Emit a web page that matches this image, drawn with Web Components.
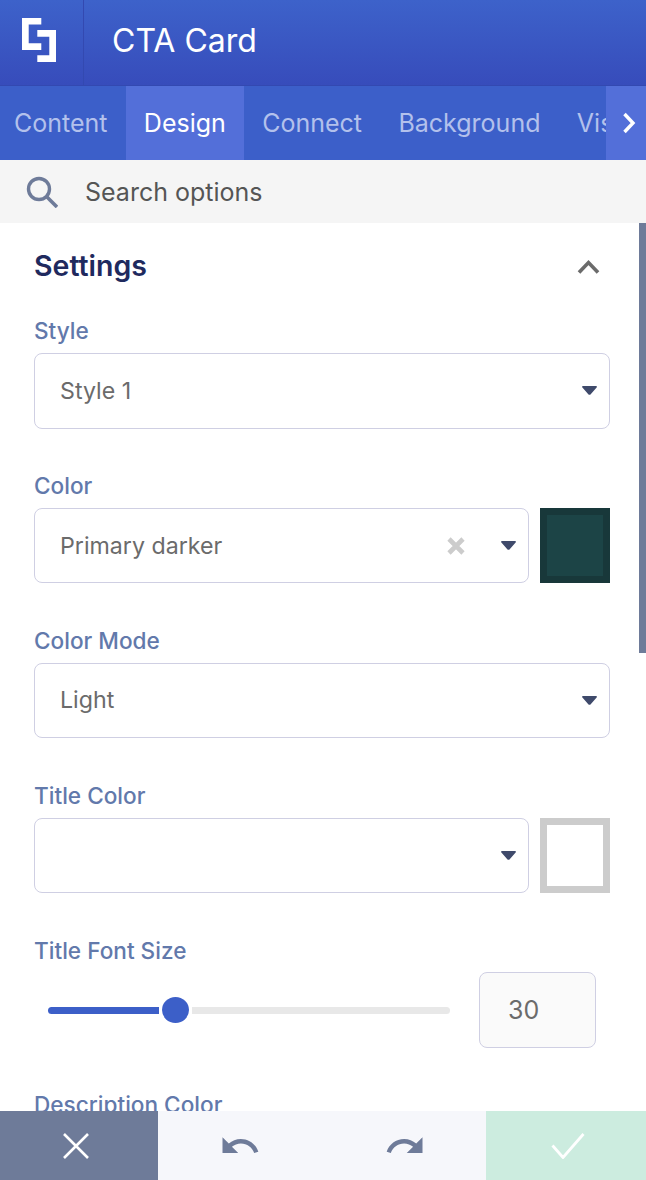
<!DOCTYPE html>
<html>
<head>
<meta charset="utf-8">
<title>CTA Card</title>
<style>
html, body { margin: 0; height: 100%; }
body { font-family: "Inter", "Liberation Sans", sans-serif; background: #fff; }
</style>
</head>
<body>
<builder-app>
  <builder-header slot="top">CTA Card</builder-header>
  <builder-tabs slot="top"></builder-tabs>
  <search-bar slot="top">Search options</search-bar>

  <settings-panel heading="Settings">
    <option-field label="Style"><select-box value="Style 1"></select-box></option-field>
    <option-field label="Color">
      <select-box value="Primary darker" clearable></select-box>
      <color-swatch color="#1c4446" edge="#18383a"></color-swatch>
    </option-field>
    <option-field label="Color Mode"><select-box value="Light"></select-box></option-field>
    <option-field label="Title Color">
      <select-box></select-box>
      <color-swatch color="#fff" edge="#ccc"></color-swatch>
    </option-field>
    <option-field label="Title Font Size"><range-input value="30"></range-input></option-field>
    <option-field label="Description Color"><select-box></select-box></option-field>
  </settings-panel>

  <action-bar slot="bottom"></action-bar>
</builder-app>

<script>
class BuilderApp extends HTMLElement {
  constructor() {
    super();
    this.attachShadow({ mode: "open" }).innerHTML = `
<style>
:host { display: flex; flex-direction: column; height: 100vh; overflow: hidden; }
.body { flex: 1; min-height: 0; overflow: hidden; position: relative; }
.thumb { position: absolute; top: 0; right: 0; width: 7px; height: 430px; background: #6e7b99; }
</style>
<slot name="top"></slot>
<div class="body"><slot></slot><div class="thumb"></div></div>
<slot name="bottom"></slot>`;
  }
}
customElements.define("builder-app", BuilderApp);

class BuilderHeader extends HTMLElement {
  constructor() {
    super();
    this.attachShadow({ mode: "open" }).innerHTML = `
<style>
:host { display: flex; height: 86px; box-sizing: border-box; color: #fff; font-size: 32px;
  background: linear-gradient(#3d62ca, #374cbb); border-bottom: 1px solid #3349b1; }
.logo { width: 83px; display: flex; align-items: center; justify-content: center; border-right: 1px solid #3349b1; }
.title { padding-left: 28px; display: flex; align-items: center; padding-bottom: 5px; }
svg { display: block; margin-left: -4px; margin-top: -5px; }
</style>
<div class="logo">
  <svg width="36" height="45" viewBox="0 0 36 45" fill="#fff">
    <path d="M0 0H19.300V6.500H6.700V25.300H19.300V32H0Z"/>
    <path d="M15.300 12H34V44H15.300V37.300H27.300V18.700H15.300Z"/>
  </svg>
</div>
<div class="title"><slot></slot></div>`;
  }
}
customElements.define("builder-header", BuilderHeader);

class BuilderTabs extends HTMLElement {
  constructor() {
    super();
    const names = ["Content", "Design", "Connect", "Background", "Visibility"];
    this.attachShadow({ mode: "open" }).innerHTML = `
<style>
:host { display: flex; height: 74px; background: #3c5fc9; font-size: 25px; overflow: hidden; }
.list { flex: 1; min-width: 0; display: flex; overflow: hidden; margin-left: -4.200px; }
.tab { flex: none; display: flex; align-items: center; padding: 0 18.200px; color: #b3c1ec; }
.tab.on { background: #536fd9; color: #fff; }
.more { flex: none; width: 40px; box-sizing: border-box; padding-left: 5px; background: #536fd9; display: flex; align-items: center; justify-content: center; }
</style>
<div class="list">${names.map((n) => `<div class="tab${n === "Design" ? " on" : ""}">${n}</div>`).join("")}</div>
<div class="more">
  <svg width="14" height="22" viewBox="0 0 14 22"><path d="M2.500 2L11 11L2.500 20" fill="none" stroke="#fff" stroke-width="3.400"/></svg>
</div>`;
  }
}
customElements.define("builder-tabs", BuilderTabs);

class SearchBar extends HTMLElement {
  constructor() {
    super();
    this.attachShadow({ mode: "open" }).innerHTML = `
<style>
:host { display: flex; align-items: center; height: 63px; background: #f5f5f5; color: #555; font-size: 25px; padding-left: 26px; }
svg { display: block; margin-right: 27px; }
</style>
<svg width="32" height="32" viewBox="0 0 32 32" fill="none" stroke="#6e7b99">
  <circle cx="13" cy="13" r="10.500" stroke-width="3.400"/>
  <path d="M20.500 20.500L31 31" stroke-width="3.600"/>
</svg>
<slot></slot>`;
  }
}
customElements.define("search-bar", SearchBar);

class SettingsPanel extends HTMLElement {
  constructor() {
    super();
    this.attachShadow({ mode: "open" }).innerHTML = `
<style>
:host { display: block; padding: 0 36px 0 34px; }
.head { display: flex; align-items: center; justify-content: space-between; height: 86px; padding-right: 10px; margin-bottom: 9.200px;
  color: #1f2a5e; font-size: 28.500px; font-weight: 600; }
.head span { margin-top: -2px; }
.head svg { display: block; }
</style>
<div class="head">
  <span id="title"></span>
  <svg width="23" height="15" viewBox="0 0 23 15"><path d="M2 13.500L11.500 3.500L21 13.500" fill="none" stroke="#6b6b6b" stroke-width="3.600"/></svg>
</div>
<slot></slot>`;
    this.shadowRoot.getElementById("title").textContent = this.getAttribute("heading");
  }
}
customElements.define("settings-panel", SettingsPanel);

class OptionField extends HTMLElement {
  constructor() {
    super();
    this.attachShadow({ mode: "open" }).innerHTML = `
<style>
:host { display: block; margin-bottom: 44.400px; }
.label { box-sizing: border-box; height: 35px; padding-top: .2px; color: #6279ab; font-size: 22.600px; font-weight: 500; line-height: 26.800px; }
.row { display: flex; gap: 11px; }
</style>
<div class="label"></div>
<div class="row"><slot></slot></div>`;
    this.shadowRoot.querySelector(".label").textContent = this.getAttribute("label");
  }
}
customElements.define("option-field", OptionField);

class SelectBox extends HTMLElement {
  constructor() {
    super();
    const clear = this.hasAttribute("clearable")
      ? `<svg class="clear" width="18" height="18" viewBox="0 0 18 18"><path d="M2 2L16 16M16 2L2 16" stroke="#ccc" stroke-width="4.600" fill="none"/></svg>`
      : "";
    this.attachShadow({ mode: "open" }).innerHTML = `
<style>
:host { flex: 1; min-width: 0; display: flex; align-items: center; height: 75.400px; box-sizing: border-box;
  border: 1px solid #cfcfe3; border-radius: 8px; background: #fff; padding: 0 12px 0 25px;
  color: #6b6b6b; font-size: 23.200px; }
.value { flex: 1; min-width: 0; }
.clear { display: block; margin-right: 36px; }
.caret { display: block; }
</style>
<div class="value"></div>
${clear}
<svg class="caret" width="15" height="9" viewBox="0 0 15 9"><path d="M1 0H14C15 0 15.200 .8 14.600 1.500L8.500 8.400C8 9 7 9 6.500 8.400L.4 1.500C-.2 .8 0 0 1 0Z" fill="#3f4a6b"/></svg>`;
    this.shadowRoot.querySelector(".value").textContent = this.getAttribute("value") || "";
  }
}
customElements.define("select-box", SelectBox);

class ColorSwatch extends HTMLElement {
  constructor() {
    super();
    this.attachShadow({ mode: "open" }).innerHTML = `
<style>
:host { flex: none; display: block; width: 70px; box-sizing: border-box; border: 7px solid var(--edge); background: var(--fill); }
</style>`;
    this.style.setProperty("--edge", this.getAttribute("edge"));
    this.style.setProperty("--fill", this.getAttribute("color"));
  }
}
customElements.define("color-swatch", ColorSwatch);

class RangeInput extends HTMLElement {
  constructor() {
    super();
    this.attachShadow({ mode: "open" }).innerHTML = `
<style>
:host { flex: 1; display: flex; align-items: center; height: 76px; margin-bottom: -1.200px; padding: 0 14px 0 14px; }
.fill { width: 111px; height: 7px; background: #3c5fc8; border-radius: 4px 0 0 4px; }
.knob { width: 27px; height: 26px; margin: 0 3px; border-radius: 50%; background: #3c5fc8; }
.rest { flex: none; width: 258px; height: 7px; background: #e8e8e8; border-radius: 0 4px 4px 0; }
.num { flex: none; box-sizing: border-box; width: 117px; height: 76px; margin-left: 29px; padding-left: 28px; display: flex; align-items: center;
  border: 1px solid #cfcfe3; border-radius: 8px; background: #fafafa; color: #6b6b6b; font-size: 25px; }
</style>
<div class="fill"></div><div class="knob"></div><div class="rest"></div>
<div class="num"></div>`;
    this.shadowRoot.querySelector(".num").textContent = this.getAttribute("value");
  }
}
customElements.define("range-input", RangeInput);

class ActionBar extends HTMLElement {
  constructor() {
    super();
    this.attachShadow({ mode: "open" }).innerHTML = `
<style>
:host { display: flex; height: 69px; flex: none; position: relative; }
div { display: flex; align-items: center; justify-content: center; }
.cancel { width: 158px; box-sizing: border-box; padding-right: 6px; background: #6e7b99; }
.steps { flex: 1; background: #f6f7fb; }
.steps > div { flex: 1; }
.steps > div + div { padding-left: 2px; }
.ok { width: 160px; box-sizing: border-box; padding-left: 4px; background: #ccecdf; }
svg { display: block; }
</style>
<div class="cancel">
  <svg width="28" height="28" viewBox="0 0 28 28"><path d="M2 2L26 26M26 2L2 26" stroke="#fff" stroke-width="2.600" fill="none"/></svg>
</div>
<div class="steps">
  <div><svg width="42" height="42" viewBox="0 0 24 24" fill="#6e7b99"><path d="M12.500 8c-2.650 0-5.050.99-6.900 2.600L2 7v9h9l-3.620-3.620c1.390-1.160 3.160-1.880 5.120-1.880 3.540 0 6.550 2.310 7.600 5.500l2.370-.78C21.080 11.030 17.150 8 12.500 8z"/></svg></div>
  <div><svg width="42" height="42" viewBox="0 0 24 24" fill="#6e7b99"><path d="M18.400 10.600C16.550 8.990 14.150 8 11.500 8c-4.650 0-8.580 3.030-9.960 7.220L3.900 16c1.050-3.190 4.050-5.500 7.600-5.500 1.950 0 3.730.72 5.120 1.880L13 16h9V7l-3.600 3.600z"/></svg></div>
</div>
<div class="ok">
  <svg width="34" height="26" viewBox="0 0 34 26"><path d="M1.500 12.500L12 24.500L32.500 1" stroke="#fff" stroke-width="2.800" fill="none"/></svg>
</div>`;
  }
}
customElements.define("action-bar", ActionBar);
</script>
</body>
</html>
